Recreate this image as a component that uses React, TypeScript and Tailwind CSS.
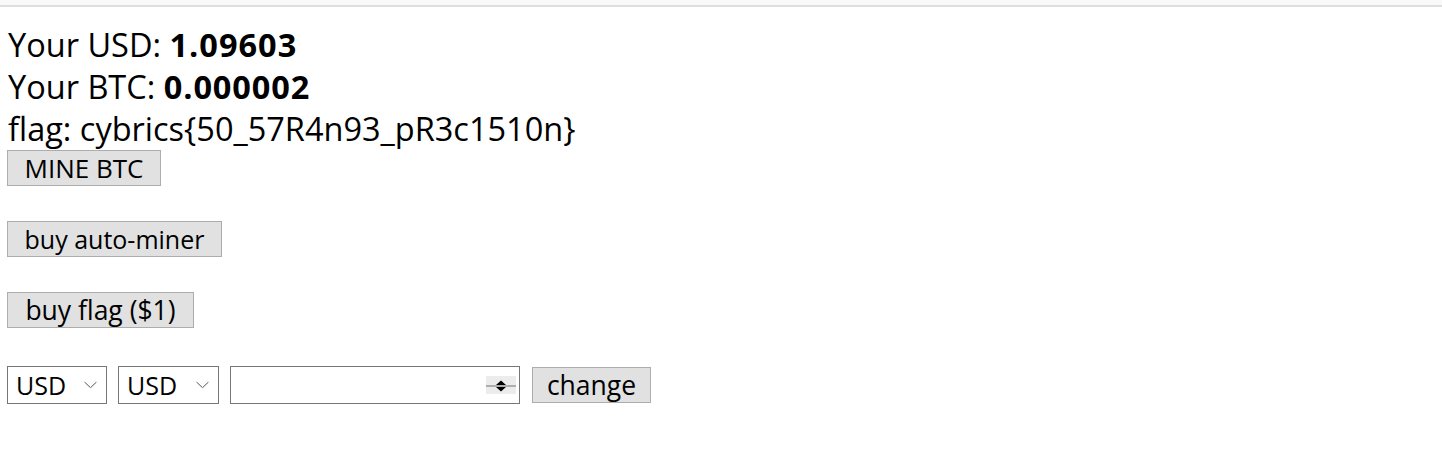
import React from "react";

function Chevron() {
  return (
    <svg
      className="pointer-events-none absolute right-[9px] top-1/2 -translate-y-1/2"
      width="13"
      height="7"
      viewBox="0 0 13 7"
      fill="none"
    >
      <path d="M0.5 0.5 L6.5 6.2 L12.5 0.5" stroke="#555" strokeWidth="1" />
    </svg>
  );
}

function Select({ w }: { w: string }) {
  return (
    <div className={`relative h-[38px] ${w} border border-[#767676] bg-white`}>
      <select className="h-full w-full appearance-none bg-transparent pl-[8px] text-[25px] leading-none outline-none">
        <option>USD</option>
        <option>BTC</option>
      </select>
      <Chevron />
    </div>
  );
}

export default function App() {
  return (
    <div className="min-h-screen bg-white font-['Open_Sans',sans-serif] text-black">
      <div className="h-[7px] border-b-2 border-[#dedede] bg-[#f9f9f9]" />
      <div className="px-[7px] pt-[17px]">
        <div className="pl-px text-[32.5px] leading-[42px]">
          <div>
            Your USD: <b className="tracking-[1px]">1.09603</b>
          </div>
          <div>
            Your BTC: <b className="tracking-[0.9px]">0.000002</b>
          </div>
          <div>flag: cybrics{"{"}50_57R4n93_pR3c1510n{"}"}</div>
        </div>
        <div className="flex flex-col items-start gap-[35px]">
          <button className="h-[36px] w-[154px] border border-[#adadad] bg-[#e1e1e1] text-[26px] leading-none">
            MINE BTC
          </button>
          <button className="h-[36px] w-[215px] border border-[#adadad] bg-[#e1e1e1] text-[25px] leading-none">
            buy auto-miner
          </button>
          <button className="h-[36px] w-[187px] border border-[#adadad] bg-[#e1e1e1] text-[26.5px] leading-none">
            buy flag ($1)
          </button>
        </div>
        <div className="mt-[38px] flex items-center gap-[11px]">
          <Select w="w-[100px]" />
          <Select w="w-[101px]" />
          <div className="relative h-[38px] w-[290px] border border-[#767676] bg-white">
            <input
              type="text"
              className="h-full w-full bg-transparent px-2 text-[25px] outline-none"
            />
            <svg
              className="pointer-events-none absolute right-[3px] top-[9px]"
              width="30"
              height="18"
              viewBox="0 0 30 18"
            >
              <rect x="0" y="0" width="30" height="18" fill="#ececec" />
              <path d="M10 9 L20 9 L15 4.5 Z" fill="#000" />
              <line x1="0" y1="10" x2="30" y2="10" stroke="#9a9a9a" strokeWidth="1.5" />
              <path d="M10 11 L20 11 L15 15.5 Z" fill="#000" />
            </svg>
          </div>
          <button className="ml-px h-[36px] w-[119px] border border-[#adadad] bg-[#e1e1e1] text-[26.5px] leading-none">
            change
          </button>
        </div>
      </div>
    </div>
  );
}
